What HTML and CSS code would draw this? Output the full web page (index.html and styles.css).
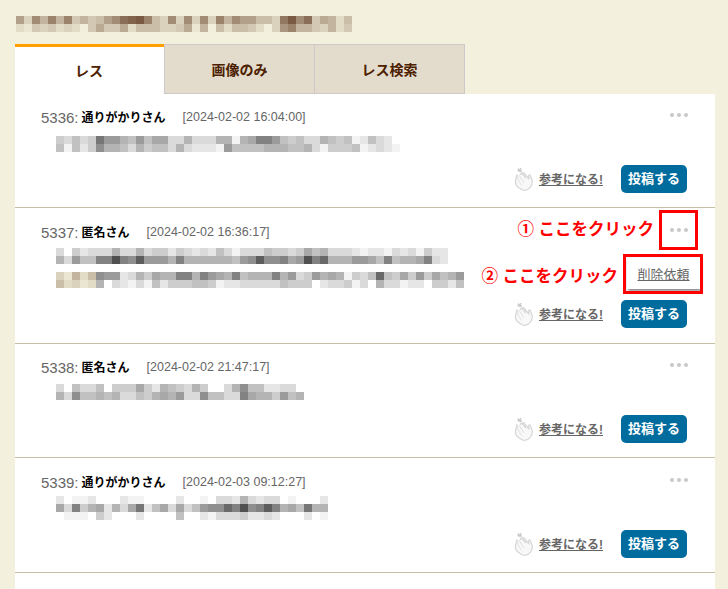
FILE: index.html
```html
<!DOCTYPE html>
<html lang="ja">
<head>
    <meta charset="UTF-8">
    <meta name="viewport" content="width=device-width, initial-scale=1.0">
    <title>レス一覧</title>
    <link rel="stylesheet" href="styles.css">
</head>
<body>

<div class="mosaic page-title" data-rows="nslpkpkrprqnlihgkqslslslskplnnqqsjgliroptq tursrtstvrorrotqqqssroupvqtqqrtvsmkpprsptr"></div>

<div class="tabs">
    <div class="tab active">レス</div>
    <div class="tab">画像のみ</div>
    <div class="tab">レス検索</div>
</div>

<div class="panel">

    <div class="post">
        <div class="post-head">
            <span class="num">5336:</span>
            <span class="name">通りがかりさん</span>
            <span class="date">[2024-02-02 16:04:00]</span>
            <span class="dots"><i></i><i></i><i></i></span>
        </div>
        <div class="post-body">
            <div class="mosaic" data-rows="bcacb4779a7a88cc9ccc99e98557abacc9abaedacdf aeadb699ac9baac9cddde7aaaa999aa9cebbbaedcdef"></div>
        </div>
        <div class="post-foot">
            <svg class="clap" viewBox="0 0 20 24"><use href="#clap-icon"/></svg>
            <a class="useful" href="#">参考になる!</a>
            <button class="reply">投稿する</button>
        </div>
    </div>

    <div class="post">
        <div class="post-head">
            <span class="num">5337:</span>
            <span class="name">匿名さん</span>
            <span class="date">[2024-02-02 16:36:17]</span>
            <span class="dots"><i></i><i></i><i></i></span>
        </div>
        <div class="post-body">
            <div class="mosaic" data-rows="cfbdccc9cc9cbbdbcdcdacecccabbcb8a9cccdeddecdcebdd 9c7aa55156277795999999a76266587153999778a5a9985cd"></div>
            <div class="mosaic" data-rows="suptq677dc9b89955957895a999597cb7989ebca3ab8b7b8a97f qtsut9fcdeceadbbbaabeddcccccabbbfdccbecf9cceddfbbda"></div>
        </div>
        <div class="post-foot">
            <svg class="clap" viewBox="0 0 20 24"><use href="#clap-icon"/></svg>
            <a class="useful" href="#">参考になる!</a>
            <button class="reply">投稿する</button>
        </div>

        <div class="note note-dots">① ここをクリック</div>
        <div class="mark mark-dots"></div>
        <div class="note note-menu">② ここをクリック</div>
        <div class="menu"><a href="#">削除依頼</a></div>
        <div class="mark mark-menu"></div>
    </div>

    <div class="post">
        <div class="post-head">
            <span class="num">5338:</span>
            <span class="name">匿名さん</span>
            <span class="date">[2024-02-02 21:47:17]</span>
            <span class="dots"><i></i><i></i><i></i></span>
        </div>
        <div class="post-body">
            <div class="mosaic" data-rows="cfaccafbbb8bd9abc9bffc96aaddccf 9c6aa9a9ccab9897cc6aacc5899b7a9"></div>
        </div>
        <div class="post-foot">
            <svg class="clap" viewBox="0 0 20 24"><use href="#clap-icon"/></svg>
            <a class="useful" href="#">参考になる!</a>
            <button class="reply">投稿する</button>
        </div>
    </div>

    <div class="post">
        <div class="post-head">
            <span class="num">5339:</span>
            <span class="name">通りがかりさん</span>
            <span class="date">[2024-02-03 09:12:27]</span>
            <span class="dots"><i></i><i></i><i></i></span>
        </div>
        <div class="post-body">
            <div class="mosaic" data-rows="dfeedfffdeeffffdffefccd9cdccfefffd 8c5b98d9c84da8c8ca766351652598a499 feeefbdfffdffffaffdecccbddcdfffdfe"></div>
        </div>
        <div class="post-foot">
            <svg class="clap" viewBox="0 0 20 24"><use href="#clap-icon"/></svg>
            <a class="useful" href="#">参考になる!</a>
            <button class="reply">投稿する</button>
        </div>
    </div>

</div>

<svg class="defs" width="0" height="0">
    <symbol id="clap-icon" viewBox="0 0 20 24">
        <path d="M4 1.500l2.500 3M7 1l-1.500 4M3.500 3.500l4.500 .5" fill="none" stroke="#cacaca" stroke-width="1.300"/>
        <path d="M3 7.500L1.500 14c-.3 2.500 1 5 3 6.500l4 2.500c3 .8 6 -.5 8 -3 1.500 -2 2 -4 1.800 -6l-2 -5.500c-.6 -1 -1.500 -.8 -1.600 .2l.2 3.300L10 6c-1 -1 -2.200 0 -1.500 1l3 3.500L8 6.500c-1 -.8 -2 .3 -1.300 1.300" fill="#f8f8f8" stroke="#d6d6d6" stroke-width="1.200" stroke-linejoin="round"/>
        <path d="M3 7.500l1 5 3.500 6M5 8l2.500 4.500M7 11l3 5" fill="none" stroke="#e2e2e2" stroke-width="1"/>
    </symbol>
</svg>

<script src="mosaic.js"></script>

</body>
</html>
```

FILE: styles.css
```css
* {
    box-sizing: border-box;
}
html, body {
    margin: 0;
    height: 100%;
    overflow: hidden;
}
body {
    display: flex;
    flex-direction: column;
    padding: 16px 13px 0 15px;
    background-color: #f3f1de;
    font-family: "Liberation Sans", Arial, "Noto Sans CJK JP", sans-serif;
}
.defs {
    position: absolute;
}

.mosaic-row {
    display: flex;
}
.mosaic-row span {
    width: 8px;
    height: 8px;
}
.page-title {
    margin-left: 1px;
    margin-bottom: 12px;
}

.tabs {
    display: flex;
}
.tab {
    width: 151px;
    height: 50px;
    display: flex;
    align-items: center;
    justify-content: center;
    padding-bottom: 1px;
    margin-left: -1px;
    background-color: #e3dccd;
    border: 1px solid #cdc9c8;
    color: #4d2000;
    font-size: 14px;
    font-weight: bold;
}
.tab.active {
    width: 150px;
    margin-left: 0;
    padding-right: 2px;
    background-color: white;
    border: none;
    border-top: 3px solid #ffa000;
}

.panel {
    flex: 1;
    background: white;
}
.post {
    position: relative;
    padding: 14px 28px 14px 26px;
    border-bottom: 1px solid #c9bea6;
}
.post:nth-child(1) { padding-top: 13px; }
.post:nth-child(1) .post-body { margin: 9px 0 13px 15px; }
.post:nth-child(2) { padding-bottom: 15px; }
.post:nth-child(2) .post-body { margin: 6px 0 12px 15px; }
.post:nth-child(3) { padding-top: 13px; }
.post:nth-child(3) .post-body { margin: 7px 0 15px 15px; }
.post:nth-child(4) .post-body { margin: 4px 0 10px 15px; }

.post-head {
    display: flex;
    align-items: center;
    height: 20px;
}
.num {
    color: #666;
    font-size: 15px;
}
.name {
    margin-left: 3px;
    margin-bottom: 2px;
    color: black;
    font-size: 12px;
    font-weight: bold;
}
.date {
    margin-left: 17px;
    color: #666;
    font-size: 12.500px;
}
.dots {
    display: flex;
    gap: 3px;
    margin-left: auto;
    margin-right: -1px;
    margin-top: -5px;
}
.dots i {
    width: 4px;
    height: 4px;
    border-radius: 50%;
    background-color: #c8c8c8;
}

.post-body {
    display: flex;
    flex-direction: column;
    gap: 8px;
}

.post-foot {
    display: flex;
    align-items: center;
    justify-content: flex-end;
    height: 28px;
}
.clap {
    width: 20px;
    height: 24px;
}
.useful {
    margin-left: 5px;
    margin-right: 18px;
    margin-bottom: 2px;
    color: #666;
    font-size: 12px;
    font-weight: bold;
}
.reply {
    width: 66px;
    height: 28px;
    padding: 0 0 3px;
    background-color: #006c9e;
    color: white;
    border: none;
    border-radius: 5px;
    font-family: inherit;
    font-size: 13px;
    font-weight: bold;
}

.note {
    position: absolute;
    color: #f00;
    font-size: 16.500px;
    font-weight: bold;
    line-height: 20px;
    white-space: nowrap;
}
.note-dots {
    top: 11px;
    right: 61px;
}
.note-menu {
    top: 58px;
    right: 97px;
}
.mark {
    position: absolute;
    border: 3px solid #f00;
}
.mark-dots {
    top: 2px;
    right: 17px;
    width: 39px;
    height: 40px;
}
.mark-menu {
    top: 46px;
    right: 12px;
    width: 80px;
    height: 40px;
}
.menu {
    position: absolute;
    top: 50px;
    right: 15px;
    width: 73px;
    height: 31px;
    display: flex;
    align-items: center;
    justify-content: center;
    padding-bottom: 1px;
    background: white;
    box-shadow: 1px 2px 3px rgba(0, 0, 0, 0.5);
}
.menu a {
    color: #666;
    font-size: 13px;
}
```

FILE: mosaic.js
```js
// 0-f is a grey ramp, g-v is a tan ramp
function cellColor(ch) {
    let code = parseInt(ch, 32);
    if (code < 16) {
        let g = Math.round(68 + code * 12.47);
        return `rgb(${g}, ${g}, ${g})`;
    }
    let t = (code - 16) / 15;
    let r = Math.round(122 + t * 120);
    let g = Math.round(90 + t * 150);
    let b = Math.round(66 + t * 154);
    return `rgb(${r}, ${g}, ${b})`;
}

document.querySelectorAll(".mosaic").forEach(box => {
    box.dataset.rows.split(" ").forEach(row => {
        let line = document.createElement("div");
        line.className = "mosaic-row";
        for (let ch of row) {
            let cell = document.createElement("span");
            cell.style.backgroundColor = cellColor(ch);
            line.appendChild(cell);
        }
        box.appendChild(line);
    });
});
```
